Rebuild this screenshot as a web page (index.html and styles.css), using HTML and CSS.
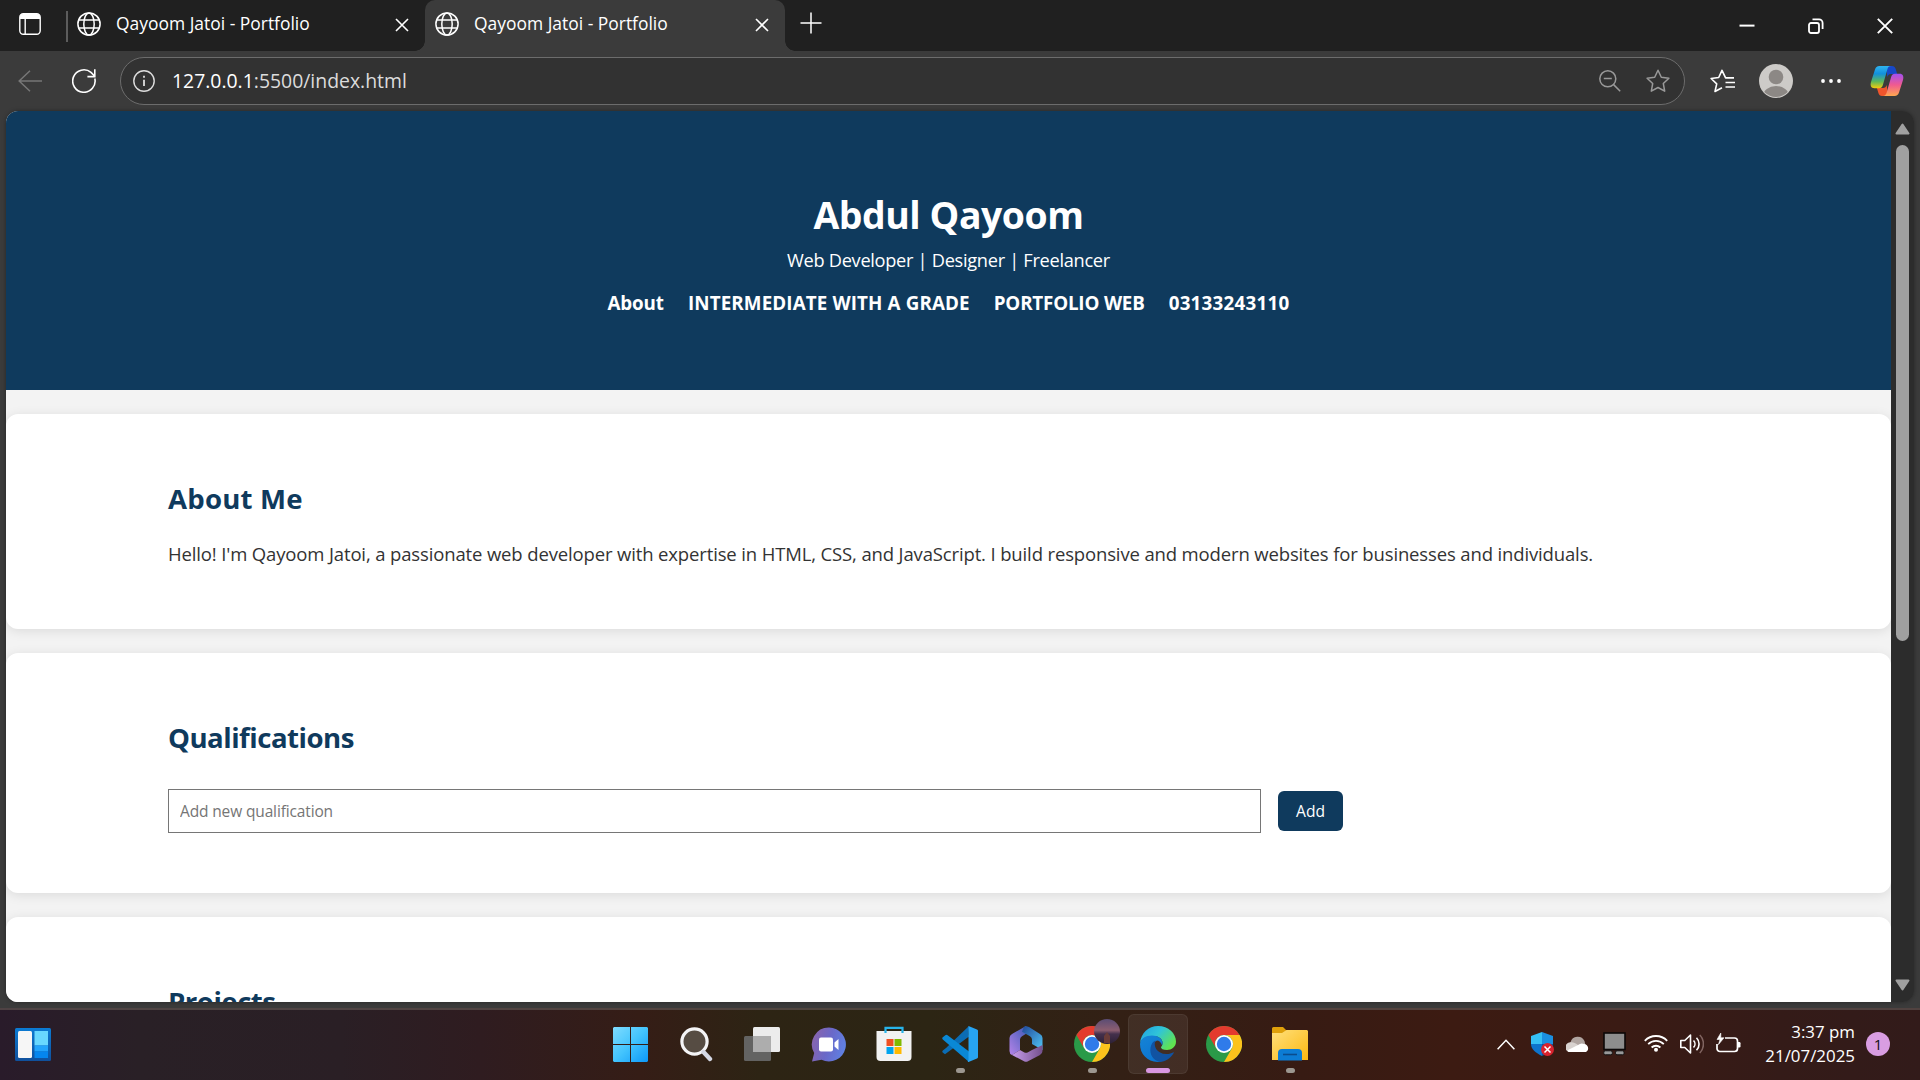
FILE: index.html
```
<!DOCTYPE html>
<html lang="en">
<head>
<meta charset="utf-8">
<title>Qayoom Jatoi - Portfolio</title>
<link rel="stylesheet" href="styles.css">
</head>
<body>
<svg class="defs" width="0" height="0" aria-hidden="true">
  <defs>
    <symbol id="globe" viewBox="0 0 24 24"><g fill="none" stroke="#fff" stroke-width="1.5"><circle cx="12" cy="12" r="11.1"/><ellipse cx="12" cy="12" rx="5.2" ry="11.1"/><path d="M1.8 8h20.4M1.8 16h20.4"/></g></symbol>
    <symbol id="cross" viewBox="0 0 14 14"><path d="M1 1l12 12M13 1L1 13" fill="none" stroke="#fff" stroke-width="1.6"/></symbol>
    <symbol id="chrome" viewBox="0 0 36 36">
      <circle cx="18" cy="18" r="18" fill="#2a9a48"/>
      <path d="M2.4 9A18 18 0 0 1 33.6 9H18a9 9 0 0 0-7.8 13.5z" fill="#e33b2e"/>
      <path d="M33.6 9A18 18 0 0 1 18 36l7.8-13.5A9 9 0 0 0 18 9z" fill="#fcc31c"/>
      <circle cx="18" cy="18" r="9" fill="#fff"/><circle cx="18" cy="18" r="7.2" fill="#2f7bea"/>
    </symbol>
  </defs>
</svg>
<div class="screen">
  <div class="tabstrip">
    <svg class="tab-actions" width="22" height="22" viewBox="0 0 22 22"><rect x=".8" y=".8" width="20.4" height="20.4" rx="3.5" fill="none" stroke="#fff" stroke-width="1.4"/><path d="M1 6V4a3 3 0 0 1 3-3h14a3 3 0 0 1 3 3v2z" fill="#fff"/><path d="M6.2 6v15" stroke="#fff" stroke-width="1.4"/></svg>
    <span class="divider"></span>
    <div class="tab"><svg width="24" height="24"><use href="#globe"/></svg><span class="tab-title">Qayoom Jatoi - Portfolio</span><svg class="tab-close" width="14" height="14"><use href="#cross"/></svg></div>
    <div class="tab active"><svg width="24" height="24"><use href="#globe"/></svg><span class="tab-title">Qayoom Jatoi - Portfolio</span><svg class="tab-close" width="14" height="14"><use href="#cross"/></svg></div>
    <svg class="new-tab" width="22" height="22" viewBox="0 0 22 22"><path d="M11 .5v21M.5 11h21" stroke="#fff" stroke-width="1.5"/></svg>
    <div class="window-controls">
      <svg width="16" height="16" viewBox="0 0 16 16"><path d="M.5 7.6h15" stroke="#fff" stroke-width="2"/></svg>
      <svg width="16" height="16" viewBox="0 0 16 16"><g fill="none" stroke="#fff" stroke-width="1.8"><rect x="1" y="5" width="10" height="10" rx="2"/><path d="M4.5 1.4H11a3.6 3.6 0 0 1 3.6 3.6v6"/></g></svg>
      <svg width="16" height="16" viewBox="0 0 16 16"><path d="M.8.8l14.4 14.4M15.2.8L.8 15.2" stroke="#fff" stroke-width="1.9"/></svg>
    </div>
  </div>

  <div class="toolbar">
    <svg class="back" width="24" height="22" viewBox="0 0 24 22"><path d="M12 .8L1.2 11 12 21.2M1.2 11H24" fill="none" stroke="#777" stroke-width="1.5"/></svg>
    <svg class="reload" width="24" height="24" viewBox="0 0 24 24"><path d="M22.8 9.5A11.2 11.2 0 1 1 19 3.4L22.8 7.2M22.8.2v7.4h-7.4" fill="none" stroke="#fff" stroke-width="1.6"/></svg>
    <div class="address">
      <svg class="info" width="22" height="22" viewBox="0 0 22 22"><circle cx="11" cy="11" r="10.2" fill="none" stroke="#ddd" stroke-width="1.4"/><path d="M11 9.8V16M11 5.8v2" stroke="#ddd" stroke-width="1.8"/></svg>
      <span class="url">127.0.0.1<span class="url-rest">:5500/index.html</span></span>
      <svg class="zoom" width="22" height="22" viewBox="0 0 22 22"><g fill="none" stroke="#999" stroke-width="1.5"><circle cx="8.8" cy="8.8" r="8"/><path d="M14.6 14.6l6.6 6.6M4.8 8.5h8"/></g></svg>
      <svg width="24" height="24" viewBox="0 0 24 24"><path d="M12 1.2l3.3 7 7.6 1-5.6 5.3 1.4 7.7L12 18.5l-6.7 3.7 1.4-7.7L1.1 9.200l7.6-1z" fill="none" stroke="#999" stroke-width="1.5" stroke-linejoin="round"/></svg>
    </div>
    <svg class="favorites" width="25" height="24" viewBox="0 0 25 24"><g fill="none" stroke="#fff" stroke-width="1.6" stroke-linejoin="round"><path d="M22 8.900h-6.400L12 1.300 8.700 8.500l-7.600 1 5.600 5.300-1.700 7.700L12 18.800M15.500 13.500H25M15.500 18H25M15.500 8.900H24"/></g></svg>
    <svg class="avatar" width="34" height="34" viewBox="0 0 34 34"><clipPath id="av"><circle cx="17" cy="17" r="16"/></clipPath><circle cx="17" cy="17" r="17" fill="#cdcbc8"/><circle cx="17" cy="13" r="7.300" fill="#8c8885"/><ellipse cx="17" cy="32" rx="13" ry="10" fill="#8c8885" clip-path="url(#av)"/></svg>
    <svg class="dots" width="20" height="4" viewBox="0 0 20 4"><g fill="#fff"><circle cx="2" cy="2" r="1.900"/><circle cx="10" cy="2" r="1.900"/><circle cx="18" cy="2" r="1.900"/></g></svg>
    <svg class="copilot" width="34" height="32" viewBox="0 0 34 32">
      <defs>
        <linearGradient id="c1" x1="0" y1="0" x2="0" y2="1"><stop offset="0" stop-color="#2fb4f0"/><stop offset=".35" stop-color="#1290dc"/><stop offset=".7" stop-color="#5fb85a"/><stop offset="1" stop-color="#f4cc0c"/></linearGradient>
        <linearGradient id="c2" x1="0" y1="0" x2="0" y2="1"><stop offset="0" stop-color="#a34ff0"/><stop offset=".5" stop-color="#f05a90"/><stop offset="1" stop-color="#ffa850"/></linearGradient>
      </defs>
      <path d="M16 1h6c2 0 3 1 3.700 3l1.500 5H21c-2 0-3 1-3.600 3z" fill="#1748c8"/>
      <path d="M18 31h-6c-2 0-3-1-3.600-3l-1.500-5H13c2 0 3-1 3.700-3z" fill="#f0552c"/>
      <path d="M9.500 1H21c-2 0-3 1.200-3.600 3.200l-4.600 16c-.6 2-1.800 3-3.800 3H4.500C1 23.200 0 20.500 1 17L5 4.500C5.700 2.200 7 1 9.500 1z" fill="url(#c1)"/>
      <path d="M24.500 31H13c2 0 3-1.200 3.600-3.200l4.600-16c.6-2 1.800-3 3.800-3h4.500C33 8.800 34 11.500 33 15l-4 12.500c-.7 2.300-2 3.500-4.500 3.500z" fill="url(#c2)"/>
    </svg>
  </div>

  <div class="viewport">
    <div class="page">
      <header class="hero">
        <h1 class="hero-name">Abdul Qayoom</h1>
        <p class="hero-role">Web Developer | Designer | Freelancer</p>
        <nav class="hero-nav"><a class="nav-about">About</a><a class="nav-grade">INTERMEDIATE WITH A GRADE</a><a class="nav-web">PORTFOLIO WEB</a><a class="nav-phone">03133243110</a></nav>
      </header>
      <section class="card about">
        <h2>About Me</h2>
        <p class="about-text">Hello! I'm Qayoom Jatoi, a passionate web developer with expertise in HTML, CSS, and JavaScript. I build responsive and modern websites for businesses and individuals.</p>
      </section>
      <section class="card quals">
        <h2 class="tight">Qualifications</h2>
        <div class="form"><input class="field" type="text" placeholder="Add new qualification"><button class="add" type="button">Add</button></div>
      </section>
      <section class="card projects">
        <h2 class="tight">Projects</h2>
      </section>
    </div>
    <div class="scrollbar">
      <svg width="15" height="12" viewBox="0 0 15 12"><path d="M7.500 1.500L13.500 10.500H1.500z" fill="#a0a0a0" stroke="#a0a0a0" stroke-width="2" stroke-linejoin="round"/></svg>
      <div class="thumb"></div>
      <svg class="down" width="15" height="12" viewBox="0 0 15 12"><path d="M7.500 10.500L13.500 1.500H1.500z" fill="#a0a0a0" stroke="#a0a0a0" stroke-width="2" stroke-linejoin="round"/></svg>
    </div>
  </div>

  <div class="taskbar">
    <svg class="widgets" width="36" height="33" viewBox="0 0 36 33"><defs><linearGradient id="wg" x1="0" y1="0" x2="0" y2="1"><stop offset="0" stop-color="#0b7bd4"/><stop offset="1" stop-color="#10509c"/></linearGradient></defs><rect width="36" height="33" rx="1.500" fill="url(#wg)"/><rect x="3" y="3" width="14" height="27" rx="1.500" fill="#f6f6f6"/><path d="M19.500 3H33v14.500H19.500z" fill="#68d8ff"/><path d="M19.500 17.500H33v6H19.500z" fill="#22a4fc"/><path d="M19.500 23.500H33V30H19.500z" fill="#0586ee"/></svg>
    <div class="apps">
      <div class="app"><svg width="35" height="35" viewBox="0 0 35 35"><defs><linearGradient id="win" x1="0" y1="0" x2="1" y2="1"><stop offset="0" stop-color="#7fdcff"/><stop offset=".5" stop-color="#43c4fd"/><stop offset="1" stop-color="#0c97f8"/></linearGradient></defs><path d="M1 0h16v17H0V1zM18 0h16l1 1v16H18zM0 18h17v17H1l-1-1zM18 18h17v16l-1 1H18z" fill="url(#win)"/></svg></div>
      <div class="app"><svg width="34" height="35" viewBox="0 0 34 35"><circle cx="15.500" cy="14.500" r="12.600" fill="#564c43" stroke="#f4f4f6" stroke-width="3.200"/><path d="M24.500 25l6.500 7" stroke="#d4d8e4" stroke-width="4.400" stroke-linecap="round"/></svg></div>
      <div class="app"><svg width="36" height="34" viewBox="0 0 36 34"><rect x="9" width="27" height="25" rx="1.500" fill="#ececec"/><rect y="9" width="27" height="25" rx="1.500" fill="#666" fill-opacity=".96"/><path d="M9 9h18v16H9z" fill="#adadad"/></svg></div>
      <div class="app"><svg width="35" height="35" viewBox="0 0 35 35"><defs><linearGradient id="chat" x1="0" y1=".3" x2="1" y2=".6"><stop offset="0" stop-color="#8964ac"/><stop offset=".5" stop-color="#6a68c8"/><stop offset="1" stop-color="#5f82e4"/></linearGradient></defs><path d="M18 .5a17 17 0 1 1-7.500 32.300L1 34.500l2.200-8.400A17 17 0 0 1 18 .5z" fill="url(#chat)"/><rect x="8" y="10.500" width="14" height="14" rx="2" fill="#fff"/><path d="M23.500 15.500l4-3.500v11l-4-3.500z" fill="#fff"/></svg></div>
      <div class="app"><svg width="36" height="36" viewBox="0 0 36 36"><path d="M.5 5h35v26a4 4 0 0 1-4 4h-27a4 4 0 0 1-4-4z" fill="#f2f2f2"/><path d="M9.500 7V1.800h17V7" fill="none" stroke="#27b4ea" stroke-width="2.200"/><path d="M10.500 13h7v7h-7z" fill="#f05022"/><path d="M18.500 13h7v7h-7z" fill="#7fba00"/><path d="M10.500 21h7v7h-7z" fill="#00a4ef"/><path d="M18.500 21h7v7h-7z" fill="#ffb900"/></svg></div>
      <div class="app running"><svg width="36" height="36" viewBox="0 0 36 36"><path d="M26.500 8.500L27 0l-23 22-3.200 2.600a1.500 1.500 0 0 0 .2 2.200l2 1.400L27 10.500z" fill="#0b6cb4"/><path d="M.8 11.300L3.300 9.200a2 2 0 0 1 2.300 0L27 25.500V36L.8 13.400a1.400 1.400 0 0 1 0-2.100z" fill="#0a88d6"/><path d="M26.500 0L35 3.500a1.500 1.500 0 0 1 1 1.300v26.400a1.500 1.500 0 0 1-1 1.300L26.500 36c-.8 0-1-.5 0-2z" fill="#27a4f2"/></svg></div>
      <div class="app"><svg width="34" height="36" viewBox="0 0 34 36"><defs><linearGradient id="m1" x1="0" y1="1" x2="1" y2="0"><stop offset="0" stop-color="#b584e8"/><stop offset="1" stop-color="#3658b4"/></linearGradient><linearGradient id="m2" x1="0" y1="0" x2="1" y2="1"><stop offset="0" stop-color="#204898"/><stop offset="1" stop-color="#52c8f8"/></linearGradient><linearGradient id="m3" x1="0" y1="0" x2="1" y2="0"><stop offset="0" stop-color="#c69cec"/><stop offset="1" stop-color="#74508c"/></linearGradient></defs><path d="M17 0L3 8Q.5 9.500.5 12v13q0 3 2.500 4l8-5V13.500q0-2 2-3.200L20 6z" fill="url(#m1)"/><path d="M15 .8Q17-.5 20 1l11 7q2.500 1.500 2.500 4v12L23 18v-4.500q0-2-2-3.200l-8-4.600z" fill="url(#m2)"/><path d="M3 29l12 6.300q2 1 4 0L31 29q2.500-1.500 2.500-4V19L23 24l-4 2.300q-2 1-4 0L11 24z" fill="url(#m3)"/></svg></div>
      <div class="app running"><svg width="36" height="36"><use href="#chrome"/></svg><svg class="profile" width="26" height="25" viewBox="0 0 26 25"><defs><linearGradient id="sky" x1="0" y1="0" x2="0" y2="1"><stop offset="0" stop-color="#5a4c74"/><stop offset=".45" stop-color="#8c5e70"/><stop offset=".6" stop-color="#44304c"/><stop offset="1" stop-color="#2c2034"/></linearGradient></defs><ellipse cx="13" cy="12.500" rx="13" ry="12.500" fill="url(#sky)"/><path d="M10 24v-7l3-4 3 4v7z" fill="#6a3c38"/></svg></div>
      <div class="app current"><svg width="36" height="36" viewBox="0 0 36 36"><defs><linearGradient id="e1" x1="0" y1="0" x2="1" y2=".6"><stop offset="0" stop-color="#1d9ee4"/><stop offset=".5" stop-color="#30c4d8"/><stop offset="1" stop-color="#60e450"/></linearGradient><linearGradient id="e2" x1="0" y1="0" x2=".6" y2="1"><stop offset="0" stop-color="#1684d6"/><stop offset="1" stop-color="#0b74d0"/></linearGradient></defs><path d="M0 17C1 7 8.500 0 18 0c10.500 0 18 7.500 18 15.500 0 5.500-4.500 8.500-9 8.500-4 0-6-1.500-6-2.500s1.600-1.800 1.600-4.500c0-4-4-7-9-7C7 10 1.500 12.500 0 17z" fill="url(#e1)"/><path d="M0 18C.5 12.500 5.500 9.500 12 9.500c6 0 10.600 3.500 10.600 7.500 0 .8-.2 1.600-.6 2.200-.8-3-3-4.700-5-4.700-4.500 2-6 6-5 10.500C13 31 18 35 22 35.500 9 38 0 29 0 18z" fill="url(#e2)"/><path d="M15.500 14.500c-2.500 5 1 13.500 11 13.500 3 0 5-.8 6.500-1.600.6-.3 1 .2.7.7C30.500 32.500 25 36 20 36 13 34.500 9.500 28 10.500 22c.6-4 2.500-6.600 5-7.500z" fill="#1153a2"/></svg></div>
      <div class="app"><svg width="36" height="36"><use href="#chrome"/></svg></div>
      <div class="app running"><svg width="36" height="34" viewBox="0 0 36 34"><defs><linearGradient id="fo" x1="0" y1="0" x2="1" y2="1"><stop offset="0" stop-color="#ffe07c"/><stop offset="1" stop-color="#fcb811"/></linearGradient></defs><path d="M0 1.500A1.500 1.500 0 0 1 1.500 0H11l4 4v5H0z" fill="#dfa00a"/><path d="M0 6h10l4.500-3H35l1 1v29H0z" fill="url(#fo)"/><path d="M6 33.500V26a4 4 0 0 1 4-4h16a4 4 0 0 1 4 4v7.500z" fill="#0c7cd4"/><path d="M11 27.500h14" stroke="#0a4c8c" stroke-width="1.600"/></svg></div>
    </div>
    <div class="tray">
      <svg class="t-chevron" width="18" height="11" viewBox="0 0 18 11"><path d="M.6 10.200L9 1.300l8.400 8.900" fill="none" stroke="#fff" stroke-width="1.500"/></svg>
      <svg class="t-shield" width="23" height="24" viewBox="0 0 23 24"><path d="M11 0L0 4v8h11z" fill="#35c0f4"/><path d="M11 0l11 4v8H11z" fill="#1a8fe0"/><path d="M0 12h11v12C4 20.500 0 17 0 12z" fill="#0d74cc"/><path d="M11 12h11c0 5-4 9-11 12z" fill="#0c57a0"/><circle cx="16.500" cy="17.500" r="6.500" fill="#d9232e"/><path d="M13.500 14.500l6 6M19.500 14.500l-6 6" stroke="#fff" stroke-width="1.500"/></svg>
      <svg class="t-cloud" width="24" height="17" viewBox="0 0 24 17"><path d="M5 16a5 5 0 0 1-.5-9.800A7.500 7.500 0 0 1 18.500 5l1 4.500L10 16z" fill="#b0a5a1"/><path d="M4 16a4.500 4.500 0 0 1 0-9.500c3-.5 5 .5 8 2.500l-4 7z" fill="#d8d2cf"/><path d="M3 16c-1.500 0-2-1.300-1-2L12 9c2-1.600 4-2 6-1a4.300 4.300 0 0 1 2 8z" fill="#fff"/></svg>
      <svg class="t-device" width="23" height="24" viewBox="0 0 23 24"><rect x="1" y="1" width="21" height="16.500" fill="#8d8d8d" stroke="#0c0808" stroke-width="1.600"/><rect x=".8" y="18.800" width="8.500" height="4" rx="1.500" fill="#999" stroke="#111"/><rect x="12.500" y="18.800" width="8.500" height="4" rx="1.500" fill="#999" stroke="#111"/></svg>
      <svg class="t-wifi" width="24" height="18" viewBox="0 0 24 18"><g fill="none" stroke="#fff" stroke-width="1.800"><path d="M.8 6.800a15.500 15.500 0 0 1 22.400 0M4.200 10.200a11 11 0 0 1 15.600 0M7.600 13.500a6.400 6.400 0 0 1 8.800 0"/></g><circle cx="12" cy="15.800" r="2" fill="#fff"/></svg>
      <svg class="t-sound" width="24" height="20" viewBox="0 0 24 20"><g fill="none" stroke="#fff" stroke-width="1.600" stroke-linejoin="round"><path d="M.8 6.500h4L10.500 1v18l-5.700-5.500h-4z"/><path d="M13.500 6.500a5 5 0 0 1 0 7M16.500 3.700a9 9 0 0 1 0 12.600"/><path d="M19.800 1a13 13 0 0 1 0 18" stroke="#806460"/></g></svg>
      <svg class="t-battery" width="25" height="20" viewBox="0 0 25 20"><path d="M9 5h9.500a3 3 0 0 1 3 3v7.500a3 3 0 0 1-3 3H4a3 3 0 0 1-3-3V11" fill="none" stroke="#fff" stroke-width="1.700"/><path d="M22 9h1.300q1.200 0 1.200 1.200v3q0 1.200-1.200 1.200H22z" fill="#fff"/><path d="M4.800 0L1 6.500h3L2.500 11.500 8 4.800H4.800z" fill="#fff" stroke="#fff" stroke-width=".6"/></svg>
      <div class="clock"><span>3:37 pm</span><span>21/07/2025</span></div>
      <span class="badge">1</span>
    </div>
  </div>
</div>
</body>
</html>
```
FILE: styles.css
```
* { box-sizing: border-box; }
body {
  margin: 0;
  font-family: "Open Sans", "Noto Sans", sans-serif;
  background: #3b3b3b;
  overflow: hidden;
}
svg { display: block; flex: none; }
h1, h2, p { margin: 0; }
.defs { position: absolute; }
.screen { width: 1920px; height: 1080px; display: flex; flex-direction: column; background: #3b3b3b; overflow: hidden; }

/* tab strip */
.tabstrip { height: 51px; flex: none; display: flex; background: #202020; color: #fff; }
.tab-actions { margin: 13px 14px 0 19px; margin-right: 25px; }
.divider { width: 2px; height: 31px; margin-top: 11px; background: #5c5c5c; }
.tab { display: flex; width: 357px; padding: 12px 16px 0 9px; }
.tab-title { flex: 1; margin-left: 15px; height: 24px; line-height: 23px; font-size: 17.46px; white-space: nowrap; }
.tab-close { margin-top: 6px; }
.tab.active { position: relative; width: 360px; padding-left: 10px; background: #3b3b3b; border-radius: 10px 10px 0 0; }
.tab.active::before, .tab.active::after { content: ""; position: absolute; bottom: 0; width: 10px; height: 10px; }
.tab.active::before { left: -10px; background: radial-gradient(circle at 0 0, #202020 9.500px, #3b3b3b 10px); }
.tab.active::after { right: -10px; background: radial-gradient(circle at 100% 0, #202020 9.500px, #3b3b3b 10px); }
.new-tab { margin: 12px 0 0 15px; }
.window-controls { display: flex; gap: 53px; margin: 18px 27px 0 auto; }

/* toolbar */
.toolbar { height: 60px; flex: none; display: flex; align-items: center; padding: 0 16px 0 18px; }
.reload { margin: 0 24px 0 30px; }
.address {
  flex: 1; height: 48px; margin-top: 0; display: flex; align-items: center; padding: 0 14px 0 12px;
  background: #323232; border: 1px solid #6c6c6c; border-radius: 24px;
}
.url { flex: 1; margin-left: 17px; font-size: 19.4px; line-height: 28px; color: #fff; }
.url-rest { color: #dcdcdc; }
.zoom { margin-right: 25px; }
.favorites { margin: 0 24px 0 25px; }
.dots { margin: 0 29px 0 28px; }

/* web page area */
.viewport { height: 891px; margin: 0 6px; flex: none; display: flex; border-radius: 12px; overflow: hidden; box-shadow: 0 0 4px rgba(0, 0, 0, .35); }
.page { flex: 1; height: 891px; overflow: hidden; background: #f3f3f3; color: #333; }
.hero { height: 279px; padding-top: 79px; background: #0f3a5d; color: #fff; text-align: center; }
.hero-name { font-size: 37.4px; line-height: 49px; letter-spacing: -.45px; }
.hero-role { margin-top: 6px; font-size: 18.2px; line-height: 30px; letter-spacing: -.29px; }
.hero-nav { display: flex; justify-content: center; gap: 24px; margin-top: 13px; font-size: 18.8px; font-weight: 700; line-height: 30px; }
.nav-about { letter-spacing: -.1px; }
.nav-grade { letter-spacing: .13px; }
.nav-web { letter-spacing: -.18px; }
.nav-phone { letter-spacing: .25px; }
.card { margin-top: 24px; padding: 60px 162px 0; background: #fff; border-radius: 12px; box-shadow: 0 2px 12px rgba(0, 0, 0, .1); }
.card h2 { font-size: 27.6px; line-height: 48px; letter-spacing: .2px; color: #0f3a5d; }
.card .tight { letter-spacing: -.5px; }
.about { height: 215px; }
.about-text { margin-top: 17px; font-size: 18.5px; line-height: 30px; letter-spacing: -.14px; white-space: nowrap; }
.quals { height: 240px; }
.projects { height: 240px; }
.form { display: flex; align-items: center; gap: 17px; margin-top: 28px; }
.field { width: 1093px; height: 44px; padding: 0 11px; border: 1px solid #767676; border-radius: 0; font: 15.5px "Open Sans", sans-serif; letter-spacing: -.14px; background: #fff; }
.field::placeholder { color: #757575; opacity: 1; }
.add { width: 65px; height: 40px; padding: 0; border: 0; border-radius: 6px; background: #0f3a5d; color: #fff; font: 15.6px "Open Sans", sans-serif; }

.scrollbar { width: 23px; display: flex; flex-direction: column; align-items: center; padding: 12px 0 11px; background: #2c2c2c; }
.thumb { width: 13px; height: 496px; margin-top: 10px; border-radius: 7px; background: #a0a0a0; }
.down { margin-top: auto; }

/* taskbar */
.taskbar {
  height: 72px; margin-top: 6px; flex: none; display: grid; grid-template-columns: 600px 720px 1fr;
  border-top: 2px solid rgba(92, 80, 78, .75);
  background: linear-gradient(90deg, #291b2a 0, #292026 140px, #2a1f25 340px, #2f1c20 480px, #351d16 640px, #2d2414 760px, #2c2514 930px, #332015 1120px, #371b13 1300px, #3c1b12 1450px, #3a1b14 1620px, #341b18 1780px, #321b1a 100%);
}
.widgets { margin: 18px 0 0 15px; }
.apps { display: flex; gap: 6px; padding-top: 4px; }
.app { position: relative; width: 60px; height: 60px; flex: none; display: flex; align-items: center; justify-content: center; border-radius: 6px; }
.running::after, .current::after { content: ""; position: absolute; bottom: 1px; width: 9px; height: 5px; border-radius: 3px; background: #9c9790; }
.current { background: rgba(255, 255, 255, .07); border: 1px solid rgba(255, 255, 255, .06); }
.current::after { width: 24px; bottom: 0; background: #d997e2; }
.profile { position: absolute; left: 32px; top: 5px; }
.tray { display: flex; align-items: center; height: 68px; color: #fff; }
.t-chevron { margin-left: 177px; }
.t-shield { margin-left: 16px; }
.t-cloud { margin-left: 12px; }
.t-device { margin-left: 13px; }
.t-wifi { margin: -2px 0 0 18px; }
.t-sound { margin-left: 12px; }
.t-battery { margin: -3px 0 0 12px; }
.clock { width: 114px; display: flex; flex-direction: column; text-align: right; font-size: 16.900px; line-height: 24px; margin-top: -1px; }
.badge { width: 24px; height: 24px; margin-left: 11px; border-radius: 50%; background: #d99de2; color: #111; font-size: 15px; line-height: 24px; text-align: center; }
```
